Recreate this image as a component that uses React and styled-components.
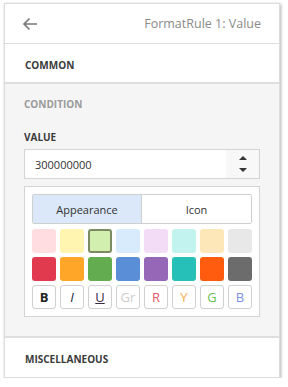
import React from 'react';
import styled, { createGlobalStyle } from 'styled-components';

const GlobalStyle = createGlobalStyle`
  body {
    margin: 0;
    padding: 3px 0 0 4px;
    background: #ffffff;
    font-family: "Open Sans", "Noto Sans", sans-serif;
  }
`;

const LIGHT_COLORS = ['#ffdde1', '#fff5b1', '#d3efaf', '#d7ebfc', '#f3dcf5', '#c3f3ef', '#fde6b8', '#e8e8e8'];
const DARK_COLORS = ['#e13a4e', '#ffa527', '#64ac50', '#5a8fd8', '#9567b6', '#27c0b8', '#ff5c0f', '#6c6c6c'];
const STYLE_BUTTONS = [
  { label: 'B', color: '#222222', bold: true },
  { label: 'I', color: '#222244', italic: true },
  { label: 'U', color: '#3a2a4a', underline: true },
  { label: 'Gr', color: '#cccccc' },
  { label: 'R', color: '#e15868' },
  { label: 'Y', color: '#f7ad4a' },
  { label: 'G', color: '#6bbf55' },
  { label: 'B', color: '#7d8fe2' },
];

const Panel = styled.div`
  width: 274px;
  border: 1px solid #dcdcdc;
  box-shadow: 1px 1px 3px rgba(0, 0, 0, 0.3);
  background: #ffffff;
`;

const Header = styled.div`
  height: 39px;
  display: flex;
  align-items: center;
  justify-content: space-between;
  padding: 0 18px 0 17px;
  border-bottom: 1px solid #dddddd;
`;

const BackButton = styled.div`
  display: flex;
  align-items: center;
  color: #777777;
`;

const Title = styled.div`
  font-size: 12.5px;
  color: #8a8a8a;
`;

const Section = styled.div`
  height: ${(p) => p.height}px;
  display: flex;
  align-items: center;
  padding: 3px 20px 0;
  box-sizing: border-box;
  border-bottom: ${(p) => (p.thick ? '2px solid #dedede' : 'none')};
`;

const SectionTitle = styled.div`
  font-size: 10px;
  font-weight: 700;
  line-height: 14px;
  color: ${(p) => (p.muted ? '#9a9a9a' : '#3a3a3a')};
`;

const Condition = styled.div`
  background: #f5f5f5;
  padding: 13px 19px 19px 19px;
  border-bottom: 2px solid #dedede;
`;

const FieldLabel = styled(SectionTitle)`
  margin-top: 19px;
  margin-bottom: 5px;
`;

const NumberBox = styled.div`
  height: 28px;
  display: flex;
  border: 1px solid #d4d4d4;
  background: #ffffff;
`;

const NumberValue = styled.div`
  flex: 1;
  display: flex;
  align-items: center;
  padding-left: 10px;
  font-size: 11px;
  color: #333333;
`;

const Spin = styled.div`
  width: 33px;
  display: flex;
  flex-direction: column;
  align-items: center;
  justify-content: center;
  gap: 8px;
  background: #f8f8f8;
`;

const Triangle = styled.div`
  width: 0;
  height: 0;
  border-left: 4px solid transparent;
  border-right: 4px solid transparent;
  ${(p) => (p.up ? 'border-bottom: 4px solid #333;' : 'border-top: 4px solid #333;')}
`;

const Editor = styled.div`
  margin-top: 7px;
  padding: 7px 7px 7px 7px;
  border: 1px solid #d4d4d4;
  background: #ffffff;
`;

const Tabs = styled.div`
  display: grid;
  grid-template-columns: 1fr 1fr;
  height: 28px;
  border: 1px solid #cfcfcf;
  border-radius: 2px;
  overflow: hidden;
  margin-bottom: 5px;
`;

const Tab = styled.div`
  display: flex;
  align-items: center;
  justify-content: center;
  font-size: 11px;
  color: #333333;
  background: ${(p) => (p.active ? '#dae8fa' : '#ffffff')};
  border-right: ${(p) => (p.active ? '1px solid #cfcfcf' : 'none')};
`;

const Grid = styled.div`
  display: grid;
  grid-template-columns: repeat(8, 24px);
  gap: 4px;
`;

const Swatch = styled.div`
  width: 24px;
  height: 24px;
  box-sizing: border-box;
  border-radius: 3px;
  background: ${(p) => p.color};
  border: ${(p) => (p.selected ? '2px solid #7c8a62' : 'none')};
`;

const StyleButton = styled.div`
  width: 24px;
  height: 24px;
  box-sizing: border-box;
  border: 1px solid #d0d0d0;
  border-radius: 3px;
  display: flex;
  align-items: center;
  justify-content: center;
  font-size: 13px;
  color: ${(p) => p.color};
  font-weight: ${(p) => (p.bold ? 700 : 400)};
  font-style: ${(p) => (p.italic ? 'italic' : 'normal')};
  text-decoration: ${(p) => (p.underline ? 'underline' : 'none')};
`;

const ArrowLeft = () => (
  <svg width="16" height="14" viewBox="0 0 16 14">
    <path d="M15 7H2M7.5 1.5L2 7l5.5 5.5" fill="none" stroke="currentColor" strokeWidth="1.6" />
  </svg>
);

const App = () => (
  <>
    <GlobalStyle />
    <Panel>
      <Header>
        <BackButton><ArrowLeft /></BackButton>
        <Title>FormatRule 1: Value</Title>
      </Header>
      <Section height={40} thick>
        <SectionTitle>COMMON</SectionTitle>
      </Section>
      <Condition>
        <SectionTitle muted>CONDITION</SectionTitle>
        <FieldLabel>VALUE</FieldLabel>
        <NumberBox>
          <NumberValue>300000000</NumberValue>
          <Spin>
            <Triangle up />
            <Triangle />
          </Spin>
        </NumberBox>
        <Editor>
          <Tabs>
            <Tab active>Appearance</Tab>
            <Tab>Icon</Tab>
          </Tabs>
          <Grid>
            {LIGHT_COLORS.map((c, i) => <Swatch key={`l${i}`} color={c} selected={i === 2} />)}
            {DARK_COLORS.map((c, i) => <Swatch key={`d${i}`} color={c} />)}
            {STYLE_BUTTONS.map((b, i) => (
              <StyleButton key={`s${i}`} {...b}>{b.label}</StyleButton>
            ))}
          </Grid>
        </Editor>
      </Condition>
      <Section height={39}>
        <SectionTitle>MISCELLANEOUS</SectionTitle>
      </Section>
    </Panel>
  </>
);

export default App;
